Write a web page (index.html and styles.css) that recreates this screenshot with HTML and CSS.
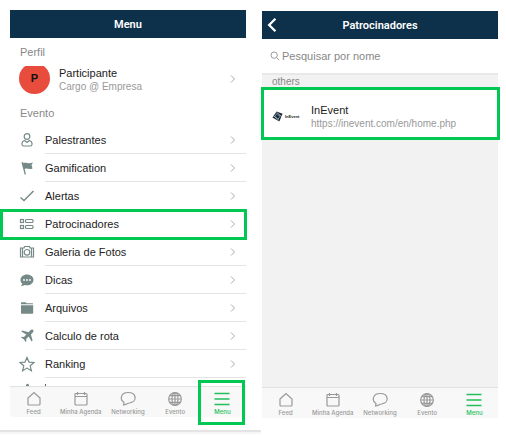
FILE: index.html
```
<!DOCTYPE html>
<html lang="pt">
<head>
  <meta charset="UTF-8" />
  <meta name="viewport" content="width=device-width, initial-scale=1.0"/>
  <title>Menu - Patrocinadores</title>
  <link rel="stylesheet" href="styles.css">
</head>
<body>
  <!-- Shared icons -->
  <svg class="sprite" aria-hidden="true">
    <symbol id="chevron" viewBox="0 0 6 10"><path d="M1 1.500 4.500 5 1 8.500"/></symbol>
    <symbol id="home" viewBox="0 0 16 16"><path d="M2 7 8 1.500 14 7v6q0 1-1 1H3q-1 0-1-1z"/></symbol>
    <symbol id="calendar" viewBox="0 0 16 16"><path d="M3 2.500h10q1 0 1 1V13q0 1-1 1H3q-1 0-1-1V3.500q0-1 1-1zM2 5.500h12M4.500 1v3M11.500 1v3"/></symbol>
    <symbol id="bubble" viewBox="0 0 16 16"><path d="M3.500 14 4 11.500C-.5 9 .5 1.500 8 1.500c9 0 9.500 9.500 1.500 10.500-2 0-3 2-6 2z"/></symbol>
    <symbol id="globe" viewBox="0 0 16 16"><circle cx="8" cy="8" r="6.300"/><ellipse cx="8" cy="8" rx="3" ry="6.300"/><path d="M8 1.700v12.600M1.700 8h12.600M2.800 4.700h10.400M2.800 11.300h10.400"/></symbol>
    <symbol id="bars" viewBox="0 0 16 16"><path d="M.5 2.500h15M.5 8h15M.5 13.500h15"/></symbol>
  </svg>

  <main class="screens">
    <section class="column">
      <div class="phone">
        <header class="topbar"><h1>Menu</h1></header>

        <h2 class="section-title profile-title">Perfil</h2>
        <a class="profile" href="#">
          <span class="avatar"><span class="avatar-circle">P</span></span>
          <span class="profile-text">
            <span class="name">Participante</span>
            <span class="detail">Cargo @ Empresa</span>
          </span>
          <svg class="chevron"><use href="#chevron"/></svg>
        </a>

        <h2 class="section-title">Evento</h2>
        <nav class="menu">
          <a class="menu-item" href="#">
            <svg class="icon line" viewBox="0 0 16 16"><circle cx="8" cy="4.500" r="2.800"/><path d="M5.500 8.500C2 9.500 2.500 14 4.500 14h7c2 0 2.500-4.500-1-5.500L8 10.500z"/></svg>
            <span class="label">Palestrantes</span><svg class="chevron"><use href="#chevron"/></svg>
          </a>
          <a class="menu-item" href="#">
            <svg class="icon solid" viewBox="0 0 16 16"><path d="M2.500 2.500 4 2l.4 1.200C7 1.500 9 4.500 14 2.500L12.500 5l1 3.500C10 10 8 7.500 5.700 9l1.300 5.500H5.700z"/></svg>
            <span class="label">Gamification</span><svg class="chevron"><use href="#chevron"/></svg>
          </a>
          <a class="menu-item" href="#">
            <svg class="icon check" viewBox="0 0 16 16"><path d="m1.500 9.500 3.500 3L14.500 3"/></svg>
            <span class="label">Alertas</span><svg class="chevron"><use href="#chevron"/></svg>
          </a>
          <a class="menu-item highlighted" href="#">
            <svg class="icon line" viewBox="0 0 16 16"><rect x="1.500" y="3.500" width="3" height="3"/><rect x="6.500" y="3.500" width="7.500" height="3" rx="1"/><rect x="1.500" y="9.500" width="3" height="3"/><rect x="6.500" y="9.500" width="7.500" height="3" rx="1"/></svg>
            <span class="label">Patrocinadores</span><svg class="chevron"><use href="#chevron"/></svg>
          </a>
          <a class="menu-item" href="#">
            <svg class="icon line" viewBox="0 0 16 16"><path d="M1.500 4H5l.5-1.500h5L11 4h3.500v9h-13zM3.500 4v9M12.500 4v9"/><circle cx="8" cy="8.300" r="2.800"/></svg>
            <span class="label">Galeria de Fotos</span><svg class="chevron"><use href="#chevron"/></svg>
          </a>
          <a class="menu-item" href="#">
            <svg class="icon solid" viewBox="0 0 16 16"><path d="M8 2.500c3.600 0 6.500 2.400 6.500 5.400S11.600 13.200 8 13.200c-.8 0-1.600-.1-2.300-.3-1 .7-2.200 1.100-3.700 1.100.7-.7 1.100-1.500 1.200-2.400C2.100 10.600 1.500 9.400 1.500 7.900c0-3 2.900-5.400 6.500-5.400z"/><g fill="#fff"><circle cx="5" cy="8" r=".9"/><circle cx="8" cy="8" r=".9"/><circle cx="11" cy="8" r=".9"/></g></svg>
            <span class="label">Dicas</span><svg class="chevron"><use href="#chevron"/></svg>
          </a>
          <a class="menu-item" href="#">
            <svg class="icon solid" viewBox="0 0 16 16"><path d="M2 4.300V3q0-.8.800-.8h3.700l1 1h6q.5 0 .5.500v.6zM2 5.300h12.200V13q0 .8-.8.800H2.800Q2 13.800 2 13z"/></svg>
            <span class="label">Arquivos</span><svg class="chevron"><use href="#chevron"/></svg>
          </a>
          <a class="menu-item" href="#">
            <svg class="icon solid" viewBox="0 0 16 16"><path d="M14.200 2c-.9-.9-2.200-.3-3 .5L9.500 4.200 3.300 2.500l-1 1 5 3L5 9l-2.200-.3-.8.800 2.800 1.800L6.600 14l.8-.8L7.200 11l2.400-2.400 3 5 1-1-1.700-6.200 1.700-1.600c.9-.9 1.300-2 .6-2.800z"/></svg>
            <span class="label">Calculo de rota</span><svg class="chevron"><use href="#chevron"/></svg>
          </a>
          <a class="menu-item" href="#">
            <svg class="icon line" viewBox="0 0 16 16"><path d="m8 1.500 2 4.600 5 .4-3.800 3.300 1.200 4.900L8 12.100l-4.400 2.600 1.200-4.900L1 6.500l5-.4z"/></svg>
            <span class="label">Ranking</span><svg class="chevron"><use href="#chevron"/></svg>
          </a>
          <!-- next item, mostly hidden behind the tab bar -->
          <div class="menu-peek">
            <svg class="icon solid" viewBox="0 0 16 16"><path d="M7 15V3q1.500-2.500 3 0v3h4v9z"/></svg>
            <span class="peek-mark"></span>
          </div>
        </nav>

        <nav class="tabbar">
          <a class="tab" href="#"><svg><use href="#home"/></svg>Feed</a>
          <a class="tab" href="#"><svg><use href="#calendar"/></svg>Minha Agenda</a>
          <a class="tab" href="#"><svg><use href="#bubble"/></svg>Networking</a>
          <a class="tab" href="#"><svg><use href="#globe"/></svg>Evento</a>
          <a class="tab active highlighted" href="#"><svg><use href="#bars"/></svg>Menu</a>
        </nav>
      </div>
      <div class="bottom-edge"></div>
    </section>

    <section class="column column-right">
      <div class="phone">
        <header class="topbar">
          <button class="back" type="button" aria-label="Voltar"><svg viewBox="0 0 10 14"><path d="M8 1.500 2.500 7 8 12.500"/></svg></button>
          <h1>Patrocinadores</h1>
        </header>

        <label class="search">
          <svg viewBox="0 0 12 12"><circle cx="5" cy="5" r="3.800"/><path d="m8 8 3 3"/></svg>
          <input type="search" placeholder="Pesquisar por nome" aria-label="Pesquisar por nome">
        </label>

        <div class="results">
          <h2 class="group-title">others</h2>
          <a class="sponsor highlighted" href="#">
            <span class="logo">
              <svg viewBox="0 0 12 12"><path fill="#20262c" d="M5 .5 11.500 3 8 11.500 .5 7z"/><path fill="none" stroke="#5b9fd0" d="M5.700 2.500 3 6l3 2.500M6 4l3 1.500L6.500 9"/><path fill="none" stroke="#fff" stroke-width=".6" d="m1.500 5 6 5M5 1.500 10.500 6"/></svg>
              <span>InEvent</span>
            </span>
            <span class="profile-text">
              <span class="name">InEvent</span>
              <span class="detail">https://inevent.com/en/home.php</span>
            </span>
          </a>
        </div>

        <nav class="tabbar">
          <a class="tab" href="#"><svg><use href="#home"/></svg>Feed</a>
          <a class="tab" href="#"><svg><use href="#calendar"/></svg>Minha Agenda</a>
          <a class="tab" href="#"><svg><use href="#bubble"/></svg>Networking</a>
          <a class="tab" href="#"><svg><use href="#globe"/></svg>Evento</a>
          <a class="tab active" href="#"><svg><use href="#bars"/></svg>Menu</a>
        </nav>
      </div>
    </section>
  </main>
</body>
</html>
```
FILE: styles.css
```
* {
    box-sizing: border-box;
}

body {
    margin: 0;
    background: #fff;
    font-family: 'Liberation Sans', Arial, sans-serif;
    font-size: 11px;
    color: #222;
}

a {
    color: inherit;
    text-decoration: none;
}

h1, h2 {
    margin: 0;
    font-weight: 400;
}

.sprite {
    position: absolute;
    width: 0;
    height: 0;
}

.screens {
    display: grid;
    grid-template-columns: 1fr 1fr;
}

.column {
    display: flex;
    flex-direction: column;
    min-width: 0;
    padding: 10px 7px 0 10px;
}

.column-right {
    padding: 11px 8px 16px 9px;
}

.phone {
    display: flex;
    flex-direction: column;
}

.column-right .phone {
    flex: 1;
}

/* Top bar */
.topbar {
    position: relative;
    height: 28px;
    display: flex;
    align-items: center;
    justify-content: center;
    background: #0e314b;
    color: #fff;
}

.topbar h1 {
    font-family: Roboto, sans-serif;
    font-size: 11px;
    font-weight: 600;
}

.back {
    position: absolute;
    left: 4px;
    top: 6px;
    padding: 0;
    border: 0;
    background: none;
    line-height: 0;
}

.back svg {
    width: 12px;
    height: 16px;
    fill: none;
    stroke: #fff;
    stroke-width: 2;
}

/* Profile */
.section-title {
    height: 26px;
    line-height: 26px;
    padding-left: 10px;
    font-size: 11px;
    color: #888;
}

.profile-title {
    height: 28px;
    line-height: 28px;
}

.profile {
    display: flex;
    height: 34px;
    padding: 0 10px 0 9px;
}

.avatar {
    display: flex;
    align-items: flex-end;
    width: 31px;
    height: 28px;
    margin-right: 9px;
    overflow: hidden;
}

.avatar-circle {
    flex: none;
    width: 31px;
    height: 31px;
    line-height: 31px;
    border-radius: 50%;
    background: #e74c3c;
    text-align: center;
    font-weight: 700;
    color: #111;
}

.profile-text {
    display: flex;
    flex-direction: column;
    flex: 1;
    line-height: 14px;
}

.detail {
    font-size: 10px;
    color: #999;
}

.chevron {
    width: 6px;
    height: 10px;
    fill: none;
    stroke: #aaa;
    stroke-width: 1;
}

.profile .chevron {
    margin-top: 8px;
}

/* Menu list */
.menu-item {
    position: relative;
    display: grid;
    grid-template-columns: 35px 1fr 6px;
    align-items: center;
    height: 28px;
    padding-right: 10px;
    background: linear-gradient(#e4e4e4, #e4e4e4) 35px 100% / 100% 1px no-repeat;
}

.icon {
    width: 16px;
    height: 16px;
    margin-left: 9px;
}

.line, .check {
    fill: none;
    stroke: #758a87;
    stroke-width: 1.2;
}

.check {
    stroke-width: 1.5;
}

.solid {
    fill: #758a87;
}

.menu-peek {
    display: flex;
    height: 8px;
    padding-top: 4px;
    overflow: hidden;
}

.peek-mark {
    width: 1px;
    height: 2px;
    margin: 2px 0 0 10px;
    background: #666;
}

/* Green frames */
.highlighted {
    position: relative;
}

.highlighted::after {
    content: '';
    position: absolute;
    border: 3px solid #00c853;
    pointer-events: none;
}

.menu-item.highlighted::after {
    inset: -1px -1px -2px -10px;
}

.tab.highlighted::after {
    inset: -7px 1px -8px -1px;
}

.sponsor.highlighted::after {
    inset: -1px -2px -1px -1px;
}

/* Tab bar */
.tabbar {
    display: grid;
    grid-template-columns: repeat(5, 1fr);
    height: 31px;
    border-top: 1px solid #e2e2e2;
    background: #f8f8f8;
}

.tab {
    display: flex;
    flex-direction: column;
    align-items: center;
    padding-top: 4px;
    font-family: Inter, sans-serif;
    font-size: 6px;
    font-weight: 500;
    line-height: 8px;
    white-space: nowrap;
    color: #999;
}

.tab svg {
    width: 16px;
    height: 16px;
    margin-bottom: 1px;
    fill: none;
    stroke: #999;
    stroke-width: 1.2;
}

.tab.active {
    color: #22bf5b;
}

.tab.active svg {
    stroke: #22bf5b;
    stroke-width: 1.5;
}

.bottom-edge {
    height: 4px;
    margin: 13px -15px 0 -10px;
    border-top: 2px solid #e4e4e4;
    background: #f6f6f6;
}

/* Sponsors */
.search {
    display: flex;
    align-items: center;
    gap: 2px;
    height: 36px;
    padding: 0 8px;
    border-bottom: 2px solid #e8e8e8;
}

.search svg {
    flex: none;
    width: 10px;
    height: 10px;
    fill: none;
    stroke: #888;
    stroke-width: 1;
}

.search input {
    flex: 1;
    min-width: 0;
    padding: 0;
    border: 0;
    outline: 0;
    background: none;
    font: inherit;
}

.search input::placeholder {
    color: #888;
    opacity: 1;
}

.results {
    flex: 1;
    background: #f2f2f2;
}

.group-title {
    height: 13px;
    padding-left: 10px;
    font-size: 10px;
    line-height: 13px;
    color: #888;
}

.sponsor {
    display: flex;
    align-items: center;
    height: 51px;
    padding: 6px 0 0 10px;
    background: #fff;
}

.logo {
    display: flex;
    align-items: center;
    gap: 2px;
    width: 39px;
    font-size: 4px;
    font-weight: 700;
}

.logo svg {
    width: 11px;
    height: 11px;
}
```
